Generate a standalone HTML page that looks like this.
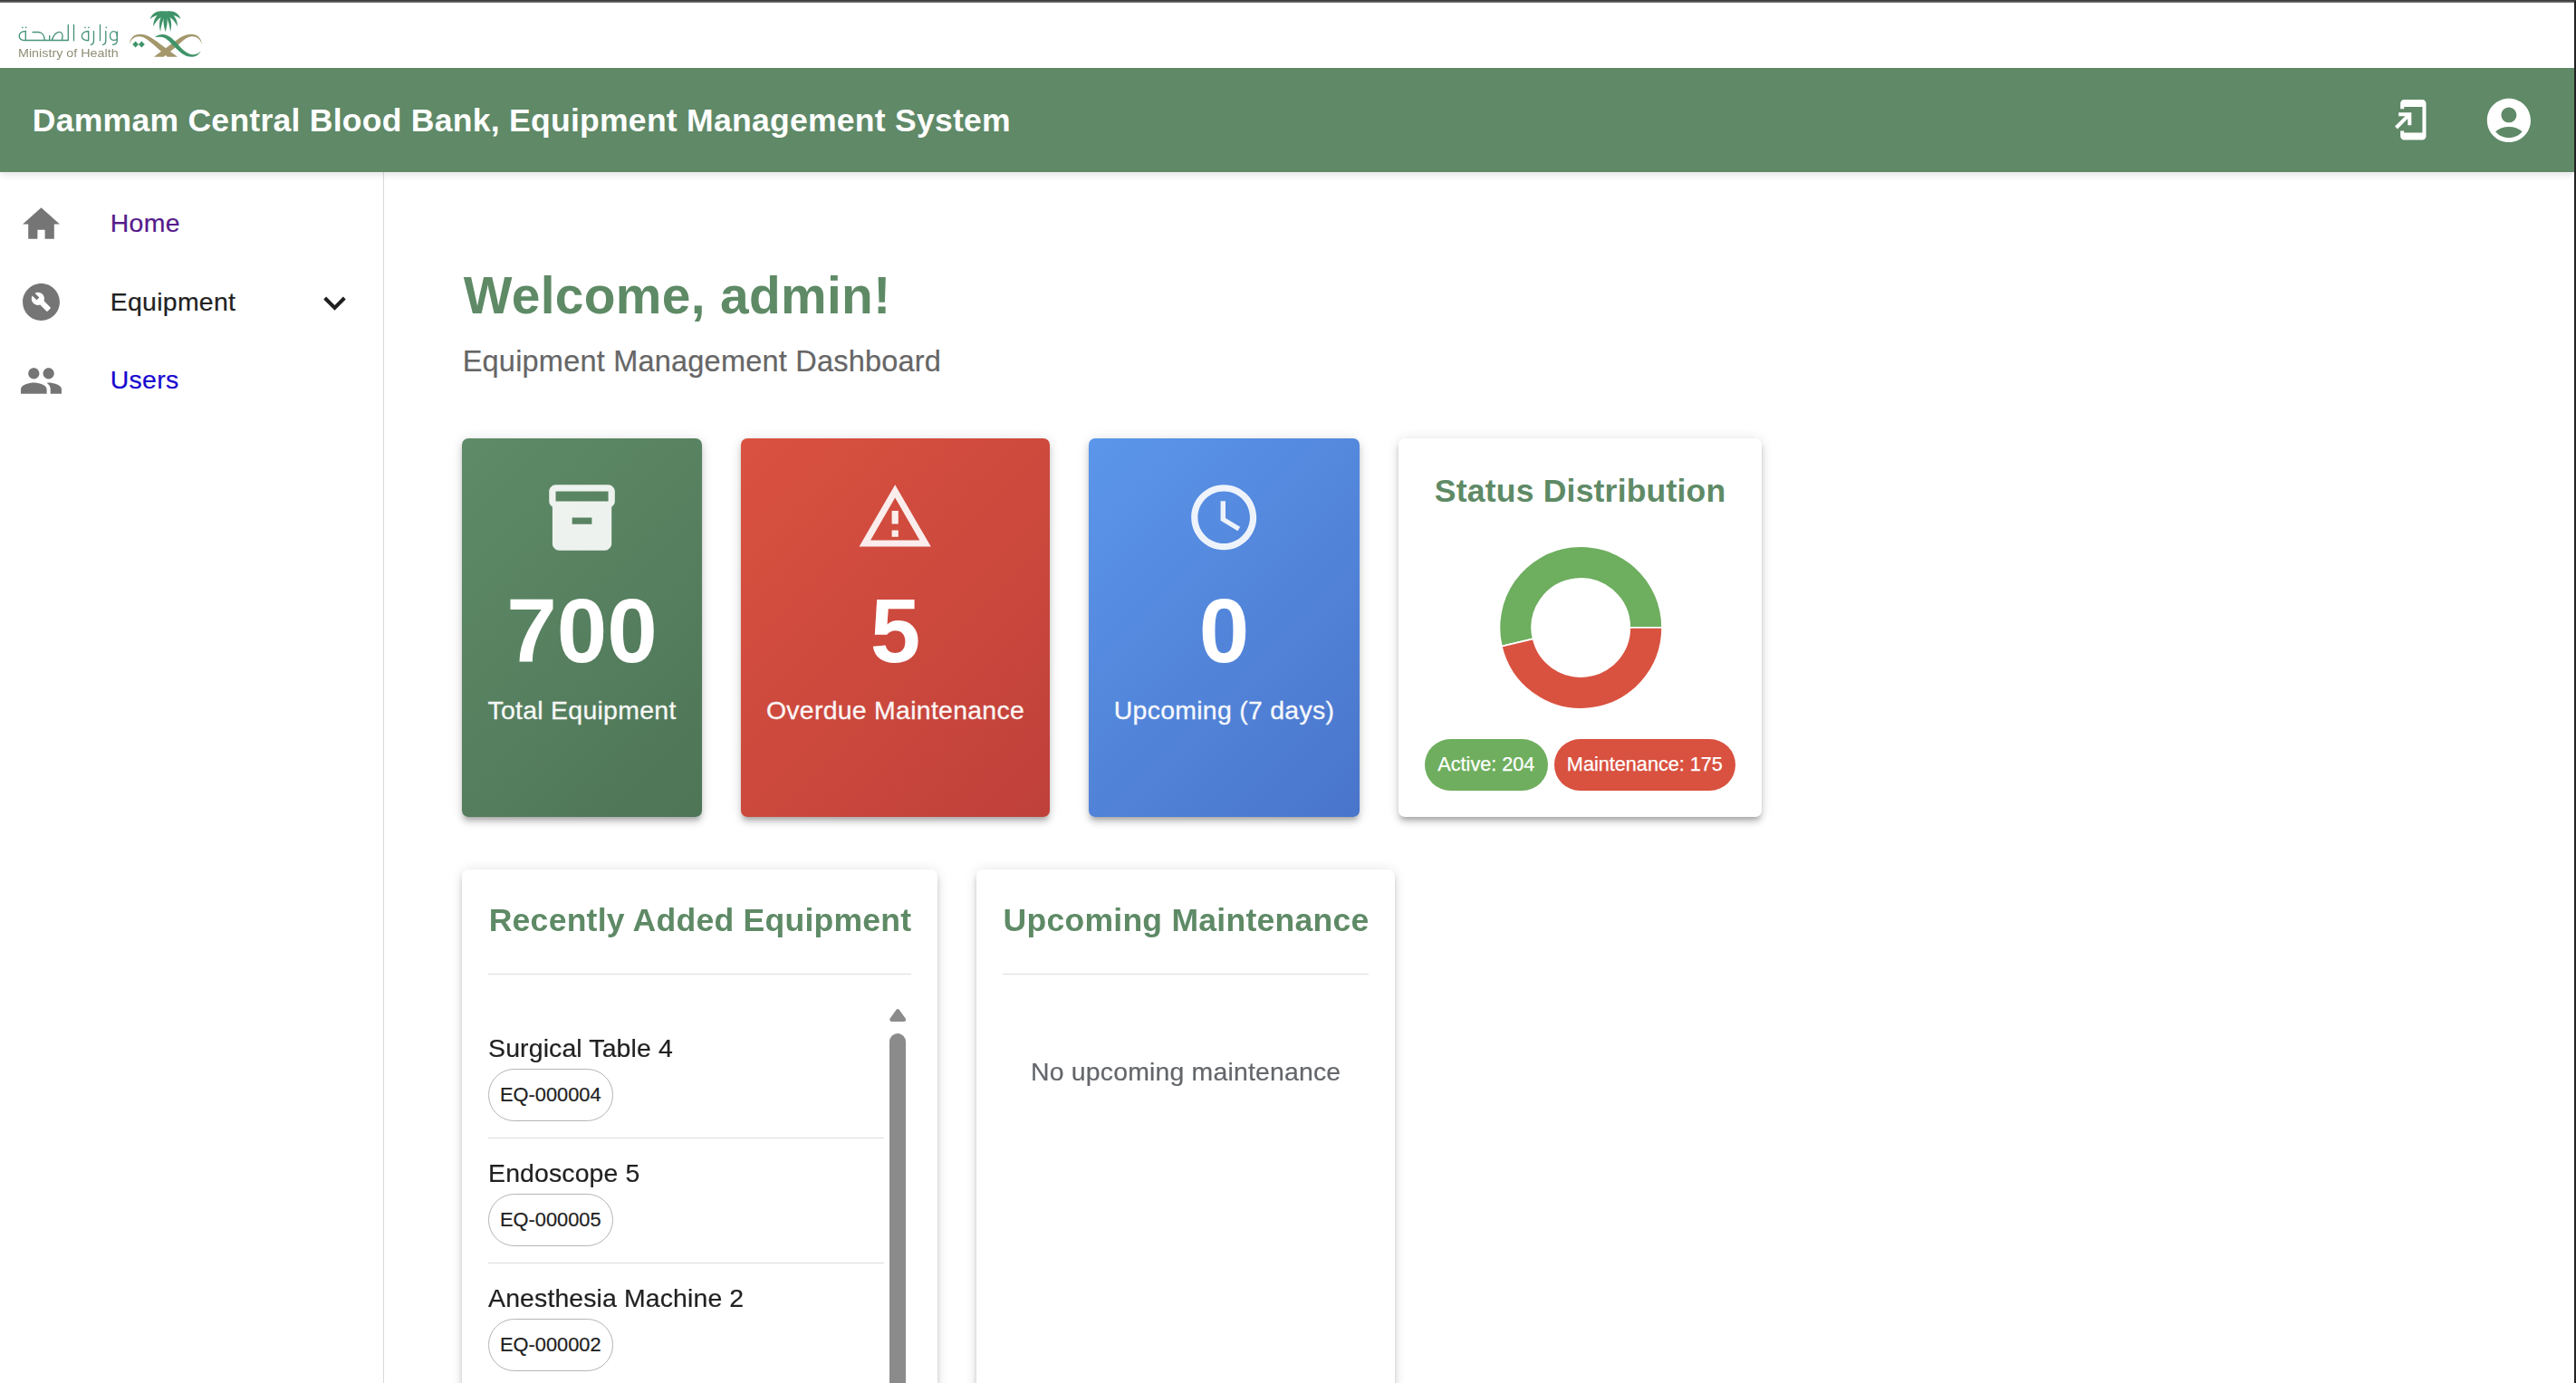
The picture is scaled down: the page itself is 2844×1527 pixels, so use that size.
<!DOCTYPE html>
<html lang="en">
<head>
<meta charset="utf-8">
<title>Dammam Central Blood Bank, Equipment Management System</title>
<style>
*{box-sizing:border-box;margin:0;padding:0}
html,body{width:2844px;height:1527px;overflow:hidden;background:#fff}
body{font-family:"Liberation Sans",sans-serif;color:#212121;position:relative}
.abs{position:absolute}
.t{position:absolute;white-space:nowrap;line-height:1}
/* window chrome */
#topline{left:0;top:0;width:2844px;height:3px;background:linear-gradient(#3c3c3c 0,#3c3c3c 1px,#555 1px,#555 2px,#747474 2px,#747474 3px)}
#rightline{left:2842px;top:1px;width:2px;height:1526px;background:#232323}
/* app bar */
#appbar{left:0;top:75px;width:2842px;height:114.5px;background:#5f8967;box-shadow:0 3.5px 7px rgba(0,0,0,.1)}
#apptitle{left:35.8px;top:116.3px;font-size:35.55px;font-weight:bold;color:#fff;letter-spacing:.25px}
/* sidebar */
#sidebar{left:0;top:189.5px;width:424px;height:1338px;background:#fff;border-right:1px solid #dadada}
.nav{font-size:28.44px;letter-spacing:.27px;-webkit-text-stroke:.2px}
.tk{-webkit-text-stroke:.2px}
.ico{position:absolute;width:49px;height:49px;fill:#757575}
/* main */
.card{position:absolute;border-radius:7px;box-shadow:0 5.3px 5.3px -3.5px rgba(0,0,0,.2),0 5.3px 7.1px 0 rgba(0,0,0,.14),0 1.8px 14.2px 0 rgba(0,0,0,.12)}
.wcard{background:#fff}
.stat{color:#fff;text-align:center}
.stat .num{position:absolute;left:0;right:0;font-size:99.9px;font-weight:bold;line-height:1;letter-spacing:0}
.stat .lbl{position:absolute;left:0;right:0;font-size:28.44px;line-height:1;letter-spacing:.28px;-webkit-text-stroke:.3px #fff;opacity:.95}
.stat svg{position:absolute;fill:#fff;opacity:.9}
.h6{font-size:35.55px;font-weight:bold;color:#5e8a66;letter-spacing:.27px}
.chip{-webkit-text-stroke:.25px;position:absolute;height:56.9px;border-radius:28.5px;color:#fff;font-size:21.65px;line-height:56.9px;text-align:center;white-space:nowrap}
.ochip{-webkit-text-stroke:.2px;position:absolute;height:57.6px;border-radius:28.8px;border:1px solid #b5b5b5;color:#212121;font-size:21.8px;line-height:56.9px;text-align:center;white-space:nowrap;background:#fff}
.hr{position:absolute;height:1px;background:#dcdcdc}
</style>
</head>
<body>
<div id="topline" class="abs"></div>

<!-- SIDEBAR -->
<div id="sidebar" class="abs"></div>
<svg class="ico" style="left:21px;top:223.4px" viewBox="0 0 24 24"><path d="M10 20v-5h4v5h5v-8h3L12 3 2 12h3v8z"/></svg>
<div class="t nav" style="left:121.8px;top:232.3px;color:#551a8b">Home</div>
<svg class="ico" style="left:20.9px;top:308.7px" viewBox="0 0 24 24"><path d="M12 2C6.48 2 2 6.48 2 12s4.48 10 10 10 10-4.48 10-10S17.52 2 12 2zm4.9 13.49-1.4 1.4c-.2.2-.51.2-.71 0l-3.41-3.41c-1.22.43-2.64.17-3.62-.81-1.11-1.11-1.3-2.79-.59-4.1l2.35 2.35 1.41-1.41-2.35-2.34c1.32-.71 2.99-.52 4.1.59.98.98 1.24 2.4.81 3.62l3.41 3.41c.19.19.19.51 0 .7z"/></svg>
<div class="t nav" style="left:121.8px;top:319.1px;color:#212121">Equipment</div>
<svg class="ico" style="left:345.2px;top:309.5px;fill:#1f1f1f" viewBox="0 0 24 24"><path d="M16.59 8.59 12 13.17 7.41 8.59 6 10l6 6 6-6z"/></svg>
<svg class="ico" style="left:20.8px;top:395.8px" viewBox="0 0 24 24"><path d="M16 11c1.66 0 2.99-1.34 2.99-3S17.66 5 16 5c-1.66 0-3 1.34-3 3s1.34 3 3 3zm-8 0c1.66 0 2.99-1.34 2.99-3S9.66 5 8 5C6.34 5 5 6.34 5 8s1.34 3 3 3zm0 2c-2.33 0-7 1.17-7 3.5V19h14v-2.5c0-2.33-4.67-3.5-7-3.5zm8 0c-.29 0-.62.02-.97.05 1.16.84 1.97 1.97 1.97 3.45V19h6v-2.5c0-2.33-4.67-3.5-7-3.5z"/></svg>
<div class="t nav" style="left:121.8px;top:405.4px;color:#1807cf">Users</div>


<!-- APP BAR -->
<div id="appbar" class="abs"></div>
<div id="apptitle" class="t">Dammam Central Blood Bank, Equipment Management System</div>


<svg class="abs" style="left:2637.6px;top:108.2px;width:48.6px;height:48.6px;fill:#fff" viewBox="0 0 24 24"><path d="M18 1.01 8 1c-1.1 0-2 .9-2 2v3h2V5h10v14H8v-1H6v3c0 1.1.9 2 2 2h10c1.1 0 2-.9 2-2V3c0-1.1-.9-1.99-2-1.99zM10 15h2V8H5v2h3.59L3 15.59 4.41 17 10 11.41V15z"/></svg>
<svg class="abs" style="left:2741px;top:104px;width:57.8px;height:57.8px;fill:#fff" viewBox="0 0 24 24"><path d="M12 2C6.48 2 2 6.48 2 12s4.48 10 10 10 10-4.48 10-10S17.52 2 12 2zm0 4c1.93 0 3.5 1.57 3.5 3.5S13.93 13 12 13s-3.5-1.57-3.5-3.5S10.07 6 12 6zm0 14c-2.03 0-4.43-.82-6.14-2.88C7.55 15.8 9.68 15 12 15s4.45.8 6.14 2.12C16.43 19.18 14.03 20 12 20z"/></svg>

<!-- LOGO -->
<div id="logobg" class="abs" style="left:0;top:3px;width:2842px;height:72px;background:#fff"></div>
<div id="logo" class="abs" style="left:0;top:0;width:300px;height:75px">
<svg class="abs" style="left:15px;top:20px;width:125px;height:52px;overflow:visible" viewBox="0 0 125 52">
<g fill="none" stroke="#47927a" stroke-width="1.35" stroke-linecap="round" stroke-linejoin="round">
<path d="M13.3 14.5C8.6 14.4 6.2 17 6.2 19.7C6.2 22.6 8.8 24.6 13.3 24.6"/>
<path d="M13.3 14.5V24.5H60.3V7.5"/>
<path d="M21.1 15.5H27.5C31.2 15.5 34 19 34.3 24.5"/>
<path d="M39.7 19.4V24.5"/>
<path d="M42.3 24.5C43.5 20.5 46.5 16.2 50 15.4C53 14.9 54.3 17.8 54 20.5C53.8 22.5 53.5 24 53.5 24.5"/>
<path d="M66.5 7.5V24.8"/>
<path d="M82.7 14.5C78 14.4 75.3 17 75.3 19.8C75.3 22.6 78 24.7 82.7 24.7V14.5"/>
<path d="M88.5 14.5V25C88.5 27.6 87.5 29 85.3 29.3"/>
<path d="M95.5 7.5V24.8"/>
<path d="M101.8 14.5V25C101.8 27.6 100.8 29 98.5 29.3"/>
<path d="M114.3 20C114.3 16.5 112.6 14.6 110.5 14.6C108 14.6 106.5 17 106.5 19.5C106.5 22.3 108.3 24.4 110.8 24.4C112.3 24.4 113.5 24 114.3 23.4"/>
<path d="M114.3 15V25C114.3 27.6 113 29 109.5 29.3"/>
</g>
<g fill="#4b957a"><circle cx="9.8" cy="10.3" r=".85"/><circle cx="13.7" cy="10.3" r=".85"/><circle cx="79" cy="10.3" r=".85"/><circle cx="82.8" cy="10.3" r=".85"/><circle cx="102.3" cy="10.3" r=".85"/></g>
</svg>
<div class="t" style="left:20.2px;top:53px;font-size:12.7px;color:#8f8d75;transform:scaleX(1.129);transform-origin:0 0;opacity:.99;will-change:transform">Ministry of Health</div>
<svg class="abs" style="left:135px;top:5px;width:100px;height:70px;overflow:visible" viewBox="0 0 100 70">
<g fill="#3f9469">
<path d="M47.6 8.5C50.6 14 50.2 22 47.6 30C45 22 44.6 14 47.6 8.5Z"/>
<path d="M46.8 8.4C41.5 12.5 39.6 21 42.1 29.9C42.9 23 44.6 16.5 48.2 11.8Z"/>
<path d="M48.4 8.4C53.7 12.5 55.6 21 53.1 29.9C52.3 23 50.6 16.5 47 11.8Z"/>
<path d="M45.8 7.8C38 10.3 33.8 16.8 34.4 24.4C36.6 18.8 40.6 14.4 47 12Z"/>
<path d="M49.4 7.8C57.2 10.3 61.4 16.8 60.8 24.4C58.6 18.8 54.6 14.4 48.2 12Z"/>
<path d="M45 7.5C38.3 6.6 32.8 10.1 30.7 16C34.3 12.9 39 11.5 45.4 11.6Z"/>
<path d="M50.2 7.5C56.9 6.6 62.4 10.1 64.5 16C60.9 12.9 56.2 11.5 49.8 11.6Z"/>
<ellipse cx="47.6" cy="10" rx="7" ry="2.7"/>
</g>
<path fill="#a3976b" d="M7.8 43.8C8.6 36.5 13.6 32.6 20 32.8C27 33 33.5 37.2 41 43L61 57.7H49.8L37 46.6C30 40.5 25 35.8 19.6 35.3C14 34.8 9.6 38.2 7.8 43.8Z"/>
<path fill="#a3976b" d="M88 43.8C87.2 36.5 82.2 32.6 76 32.8C69 33 63.5 36.6 57 41.6L34.9 57.7H45.5L60 46.2C66 41 70.5 35.9 76.2 35.3C81.6 34.8 86.2 38.2 88 43.8Z"/>
<path fill="#3f9469" d="M35.9 36.2C38.5 33.6 42 32.8 45 33C51 33.4 55.5 37.5 60.5 43C66 49 71 55 78 55.3C82 55.4 85 53.6 86.8 51C85 55.2 81.5 57.8 76.5 57.8C69 57.8 63.5 52.5 57.5 46.5C52.5 41.5 49 37 44 36C41 35.4 38 35.6 35.9 36.2Z"/>
<path fill="#3f9469" d="M14.6 40.5L18 44L14.6 47.6L11.2 44ZM21.4 40.5L24.8 44L21.4 47.6L18 44Z"/>
</svg>
</div>

<!-- MAIN -->
<div id="main">
<div class="t" style="left:511.7px;top:298.2px;font-size:56.9px;font-weight:bold;color:#5e8a66;letter-spacing:.33px">Welcome, admin!</div>
<div class="t tk" style="left:510.7px;top:382.5px;font-size:32.5px;color:#666;letter-spacing:.21px">Equipment Management Dashboard</div>

<div class="card stat" style="left:510px;top:484px;width:265px;height:417.6px;background:linear-gradient(135deg,#5f8b68 0%,#4d7556 100%)">
<svg style="left:88.7px;top:43.8px;width:87.1px;height:87.1px" viewBox="0 0 24 24"><path d="M20 2H4c-1 0-2 .9-2 2v3.01c0 .72.43 1.34 1 1.69V20c0 1.1 1.1 2 2 2h14c.9 0 2-.9 2-2V8.7c.57-.35 1-.97 1-1.69V4c0-1.1-1-2-2-2zm-5 12H9v-2h6v2zm5-7H4V4h16v3z"/></svg>
<div class="num" style="top:162.8px">700</div>
<div class="lbl" style="top:286.1px">Total Equipment</div>
</div>

<div class="card stat" style="left:818.2px;top:484px;width:340.6px;height:417.6px;background:linear-gradient(135deg,#da5240 0%,#bf403a 100%)">
<svg style="left:127.1px;top:44px;width:86.4px;height:86.4px" viewBox="0 0 24 24"><path d="M12 5.99 19.53 19H4.47L12 5.99M12 2 1 21h22L12 2zm1 14h-2v2h2v-2zm0-6h-2v4h2v-4z"/></svg>
<div class="num" style="top:162.8px">5</div>
<div class="lbl" style="top:286.1px">Overdue Maintenance</div>
</div>

<div class="card stat" style="left:1202.3px;top:484px;width:298.4px;height:417.6px;background:linear-gradient(135deg,#5b96ea 0%,#4975cb 100%)">
<svg style="left:106px;top:44px;width:86.4px;height:86.4px" viewBox="0 0 24 24"><path d="M11.99 2C6.47 2 2 6.48 2 12s4.47 10 9.99 10C17.52 22 22 17.52 22 12S17.52 2 11.99 2zM12 20c-4.42 0-8-3.58-8-8s3.58-8 8-8 8 3.58 8 8-3.58 8-8 8zm.5-13H11v6l5.25 3.15.75-1.23-4.5-2.67z"/></svg>
<div class="num" style="top:162.8px">0</div>
<div class="lbl" style="top:286.1px">Upcoming (7 days)</div>
</div>

<div class="card wcard" style="left:1544.3px;top:484px;width:400.7px;height:417.6px"></div>
<div class="t h6" style="left:1544.3px;width:400.7px;text-align:center;top:524.7px;letter-spacing:.19px">Status Distribution</div>
<svg class="abs" style="left:0;top:0;width:2844px;height:1527px;pointer-events:none" viewBox="0 0 2844 1527"><path d="M1835.15 692.95A89.9 89.9 0 1 0 1657.76 713.63L1692.70 705.37A54.0 54.0 0 1 1 1799.25 692.95Z" fill="#6eae5f" stroke="#fff" stroke-width="1.8"/><path d="M1657.76 713.63A89.9 89.9 0 0 0 1835.15 692.95L1799.25 692.95A54.0 54.0 0 0 1 1692.70 705.37Z" fill="#d95240" stroke="#fff" stroke-width="1.8"/></svg>
<div class="chip" style="left:1573px;top:816.1px;width:135.7px;background:#6fae5e">Active: 204</div>
<div class="chip" style="left:1715.8px;top:816.1px;width:200.2px;background:#d9513f">Maintenance: 175</div>

<div class="card wcard" style="left:509.8px;top:960px;width:525.4px;height:620px"></div>
<div class="t h6" style="left:539.7px;top:999.4px;letter-spacing:.245px">Recently Added Equipment</div>
<div class="hr" style="left:539.1px;top:1075px;width:467px"></div>
<div class="t tk" style="left:539.1px;top:1142.9px;font-size:28.44px;letter-spacing:.12px">Surgical Table 4</div>
<div class="ochip" style="left:539px;top:1180.4px;width:137.6px">EQ-000004</div>
<div class="hr" style="left:539.1px;top:1256px;width:437px"></div>
<div class="t tk" style="left:539.1px;top:1280.9px;font-size:28.44px;letter-spacing:.12px">Endoscope 5</div>
<div class="ochip" style="left:539px;top:1318.4px;width:137.6px">EQ-000005</div>
<div class="hr" style="left:539.1px;top:1394px;width:437px"></div>
<div class="t tk" style="left:539.1px;top:1418.9px;font-size:28.44px;letter-spacing:.12px">Anesthesia Machine 2</div>
<div class="ochip" style="left:539px;top:1456.4px;width:137.6px">EQ-000002</div>
<svg class="abs" style="left:981.9px;top:1114.1px;width:18.3px;height:14px" viewBox="0 0 18.3 14"><path d="M9.15 2.3L16 11.8H2.3Z" fill="#8b8b8b" stroke="#8b8b8b" stroke-width="4.2" stroke-linejoin="round"/></svg>
<div class="abs" style="left:982px;top:1141px;width:18.1px;height:420px;border-radius:9.05px;background:#8b8b8b"></div>

<div class="card wcard" style="left:1078px;top:960px;width:462.4px;height:620px"></div>
<div class="t h6" style="left:1107.6px;top:999.4px;letter-spacing:.245px">Upcoming Maintenance</div>
<div class="hr" style="left:1107px;top:1075px;width:403.5px"></div>
<div class="t tk" style="left:1078px;width:462.4px;text-align:center;top:1169px;font-size:28.44px;color:#63666a;letter-spacing:.17px">No upcoming maintenance</div>
</div>

<div id="rightline" class="abs"></div>
</body>
</html>
